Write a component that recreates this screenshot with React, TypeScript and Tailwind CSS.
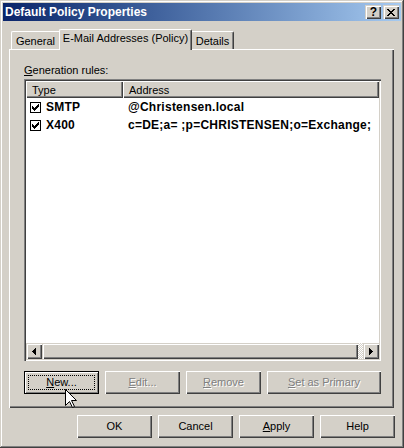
import React from "react";

const btn3d = "shadow-[inset_1px_1px_#ffffff,inset_-1px_-1px_#404040,inset_-2px_-2px_#808080]";
const scroll3d =
	"shadow-[inset_1px_1px_#d4d0c8,inset_2px_2px_#ffffff,inset_-1px_-1px_#404040,inset_-2px_-2px_#808080]";
const disabledText = "text-[#808080] [text-shadow:1px_1px_0_#ffffff]";

function U({ children }: { children: React.ReactNode }) {
	return <span className="underline">{children}</span>;
}

function Button({
	children,
	width = "w-[75px]",
	disabled = false,
	focused = false,
}: {
	children: React.ReactNode;
	width?: string;
	disabled?: boolean;
	focused?: boolean;
}) {
	return (
		<div
			className={`relative h-[23px] shrink-0 flex items-center justify-center bg-[#d4d0c8] leading-[13px] ${width} ${
				focused ? "border border-black shadow-[inset_1px_1px_#ffffff,inset_-1px_-1px_#808080]" : btn3d
			} ${disabled ? disabledText : "text-black"}`}
		>
			{focused && <span className="absolute inset-[3px] border border-dotted border-black" />}
			<span>{children}</span>
		</div>
	);
}

const CheckBox = () => (
	<svg width="11" height="11" viewBox="0 0 11 11" shapeRendering="crispEdges" className="shrink-0">
		<rect x="0.5" y="0.5" width="10" height="10" fill="#fff" stroke="#000" />
		<path
			d="M8 2h1v1H8zM7 3h2v1H7zM2 4h1v1H2zM6 4h3v1H6zM2 5h2v1H2zM5 5h3v1H5zM2 6h5v1H2zM3 7h3v1H3zM4 8h1v1H4z"
			fill="#000"
		/>
	</svg>
);

const rows = [
	{ type: "SMTP", address: "@Christensen.local" },
	{ type: "X400", address: "c=DE;a= ;p=CHRISTENSEN;o=Exchange;" },
];

export default function App() {
	return (
		<div className="relative w-[404px] h-[448px] overflow-hidden bg-[#d4d0c8] p-[3px] font-['Liberation_Sans',Arial,sans-serif] text-[11px] text-black shadow-[inset_-1px_-1px_#404040,inset_1px_1px_#d4d0c8,inset_-2px_-2px_#808080,inset_2px_2px_#ffffff]">
			{/* title bar */}
			<div className="h-[18px] flex items-center bg-linear-to-r from-[#0a246a] to-[#a6caf0] pl-[2px] pr-[2px]">
				<span className="text-white font-bold text-[12px] leading-[14px]">Default Policy Properties</span>
				<div className="ml-auto flex gap-[2px]">
					<div className={`w-[16px] h-[14px] flex items-center justify-center bg-[#d4d0c8] ${scroll3d}`}>
						<span className="font-bold text-[12px] leading-[12px] pl-px">?</span>
					</div>
					<div className={`w-[16px] h-[14px] flex items-center justify-center bg-[#d4d0c8] ${scroll3d}`}>
						<svg width="8" height="7" viewBox="0 0 8 7" shapeRendering="crispEdges">
							<path
								d="M0 0h2v1H0zM6 0h2v1H6zM1 1h2v1H1zM5 1h2v1H5zM2 2h4v1H2zM3 3h2v1H3zM2 4h4v1H2zM1 5h2v1H1zM5 5h2v1H5zM0 6h2v1H0zM6 6h2v1H6z"
								fill="#000"
							/>
						</svg>
					</div>
				</div>
			</div>

			<div className="pl-[6px] pr-[7px] pt-[8px]">
				{/* tabs */}
				<div className="h-[20px] flex items-end">
					<div className="ml-[2px] w-[48px] h-[18px] flex justify-center pt-[3px] leading-[13px] border-l border-t border-white rounded-tl-[2px]">
						General
					</div>
					<div className="relative z-10 -mb-px w-[133px] h-[21px] flex justify-center pt-[2px] leading-[13px] bg-[#d4d0c8] border-l border-t border-r border-white border-r-[#404040] rounded-t-[2px] shadow-[inset_-1px_0_#808080]">
						E-Mail Addresses (Policy)
					</div>
					<div className="w-[42px] h-[18px] flex justify-center pt-[3px] leading-[13px] border-t border-r border-t-white border-r-[#404040] rounded-tr-[2px] shadow-[inset_-1px_0_#808080]">
						Details
					</div>
				</div>

				{/* tab page */}
				<div className="h-[359px] flex flex-col bg-[#d4d0c8] pl-[15px] pr-[13px] pt-[15px] shadow-[inset_1px_1px_#ffffff,inset_-1px_-1px_#404040,inset_-2px_-2px_#808080]">
					<div className="leading-[13px] h-[13px]">
						<U>G</U>eneration rules:
					</div>

					<div className="mt-[2px] h-[282px] flex flex-col bg-white p-[2px] shadow-[inset_1px_1px_#808080,inset_2px_2px_#404040,inset_-1px_-1px_#ffffff,inset_-2px_-2px_#d4d0c8]">
						<div className="h-[17px] flex shrink-0">
							<div className={`w-[97px] pl-[6px] pt-[3px] leading-[13px] bg-[#d4d0c8] ${btn3d}`}>Type</div>
							<div className={`flex-1 pl-[6px] pt-[3px] leading-[13px] bg-[#d4d0c8] ${btn3d}`}>Address</div>
						</div>
						{rows.map((r) => (
							<div
								key={r.type}
								className="h-[18px] flex items-center font-bold text-[12px] leading-[14px] tracking-[0.25px]"
							>
								<div className="w-[97px] pl-[4px] flex items-center gap-[5px]">
									<CheckBox />
									<span>{r.type}</span>
								</div>
								<div className="pl-[5px] whitespace-nowrap">{r.address}</div>
							</div>
						))}
						<div className="flex-1" />
						{/* horizontal scrollbar */}
						<div className="h-[16px] flex shrink-0">
							<div className={`w-[16px] flex items-center justify-center bg-[#d4d0c8] ${scroll3d}`}>
								<svg width="4" height="7" viewBox="0 0 4 7" shapeRendering="crispEdges">
									<path d="M0 3h1v1H0zM1 2h1v3H1zM2 1h1v5H2zM3 0h1v7H3z" fill="#000" />
								</svg>
							</div>
							<div className={`w-[316px] bg-[#d4d0c8] ${scroll3d}`} />
							<div className="flex-1 bg-[repeating-conic-gradient(#ffffff_0_25%,#d4d0c8_0_50%)] bg-size-[2px_2px]" />
							<div className={`w-[16px] flex items-center justify-center bg-[#d4d0c8] ${scroll3d}`}>
								<svg width="4" height="7" viewBox="0 0 4 7" shapeRendering="crispEdges">
									<path d="M0 0h1v7H0zM1 1h1v5H1zM2 2h1v3H2zM3 3h1v1H3z" fill="#000" />
								</svg>
							</div>
						</div>
					</div>

					<div className="mt-[10px] flex gap-[6px]">
						<Button focused>
							<U>N</U>ew...
						</Button>
						<Button disabled>
							<U>E</U>dit...
						</Button>
						<Button disabled>
							<U>R</U>emove
						</Button>
						<Button disabled width="w-[114px]">
							<U>S</U>et as Primary
						</Button>
					</div>
				</div>

				{/* dialog buttons */}
				<div className="mt-[7px] -mr-px flex justify-end gap-[6px]">
					<Button>OK</Button>
					<Button>Cancel</Button>
					<Button>
						<U>A</U>pply
					</Button>
					<Button>Help</Button>
				</div>
			</div>

			{/* mouse pointer */}
			<svg width="12" height="19" viewBox="0 0 12 19" className="absolute left-[65px] top-[389px]">
				<path d="M0.5 0.5V16.5L4.5 12.5L7.5 18.5L9.5 17.5L6.5 11.5H11.5Z" fill="#fff" stroke="#000" />
			</svg>
		</div>
	);
}
